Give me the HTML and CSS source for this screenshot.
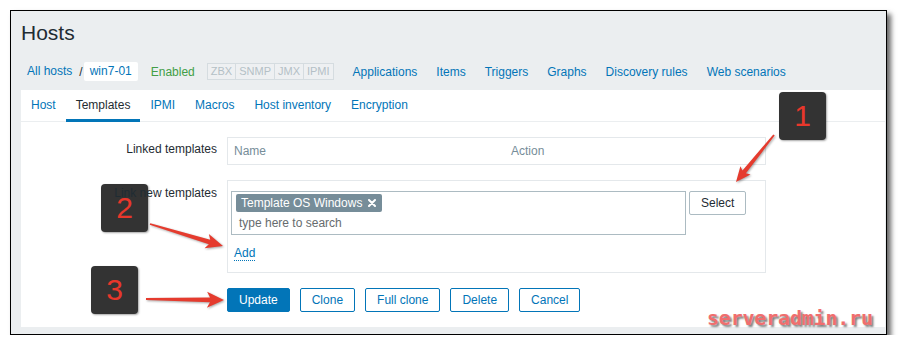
FILE: index.html
```html
<!DOCTYPE html>
<html>
<head>
<meta charset="utf-8">
<title>Hosts</title>
<link rel="stylesheet" href="styles.css">
</head>
<body>
<div class="frame">
  <header class="page-head">
    <h1 class="title">Hosts</h1>
    <div class="crumbs">
      <ul class="path">
        <li><a class="crumb">All hosts</a></li>
        <li class="sep">/</li>
        <li><span class="crumb current">win7-01</span></li>
      </ul>
      <span class="status-on">Enabled</span>
      <span class="avail"><span>ZBX</span><span>SNMP</span><span>JMX</span><span>IPMI</span></span>
      <nav class="links">
        <a>Applications</a><a>Items</a><a>Triggers</a><a>Graphs</a><a>Discovery rules</a><a>Web scenarios</a>
      </nav>
    </div>
  </header>
  <section class="panel">
    <ul class="tabs">
      <li><a class="tab">Host</a></li>
      <li><a class="tab active">Templates</a></li>
      <li><a class="tab">IPMI</a></li>
      <li><a class="tab">Macros</a></li>
      <li><a class="tab">Host inventory</a></li>
      <li><a class="tab">Encryption</a></li>
    </ul>
    <div class="form">
      <div class="lbl">Linked templates</div>
      <div class="linked">
        <span class="th th-name">Name</span>
        <span class="th">Action</span>
      </div>
      <div class="lbl lbl-2">Link new templates</div>
      <div class="newbox">
        <div class="ms-row">
          <div class="ms">
            <div class="tags">
              <span class="tag">Template OS Windows<svg class="tag-x" width="8" height="8" viewBox="0 0 8 8"><path d="M1 1L7 7M7 1L1 7" stroke="#fff" stroke-width="2" stroke-linecap="round"/></svg></span>
            </div>
            <div class="search">type here to search</div>
          </div>
          <button class="btn btn-grey">Select</button>
        </div>
        <div class="add-row"><a class="add">Add</a></div>
      </div>
      <div class="actions">
        <button class="btn btn-primary">Update</button>
        <button class="btn">Clone</button>
        <button class="btn">Full clone</button>
        <button class="btn">Delete</button>
        <button class="btn">Cancel</button>
      </div>
    </div>
  </section>
</div>

<div class="badge b1">1</div>
<div class="badge b2">2</div>
<div class="badge b3">3</div>

<svg class="arrows" width="898" height="346" viewBox="0 0 898 346">
  <g fill="#e53b2e">
    <polygon transform="translate(774 135) rotate(128.96)" points="0,-0.9 47.4,-2.2 45.4,-6.5 60.4,0 45.4,6.5 47.4,2.2 0,0.9"/>
    <polygon transform="translate(150 224) rotate(16.77)" points="0,-0.9 62.2,-2.4 59.2,-7.5 76.2,0 59.2,7.5 62.2,2.4 0,0.9"/>
    <polygon transform="translate(146 299) rotate(0.73)" points="0,-0.9 64,-2.4 61,-8 78,0 61,8 64,2.4 0,0.9"/>
  </g>
</svg>

<div class="watermark">serveradmin.ru</div>
</body>
</html>
```

FILE: styles.css
```css
body {
  margin: 0;
  background: #fff;
  font-family: "Liberation Sans", Arial, sans-serif;
  font-size: 12px;
  color: #1f2c33;
}

a { color: #0275b8; text-decoration: none; }
ul { list-style: none; margin: 0; padding: 0; }

.frame {
  margin: 10px 0 0 10px;
  width: 877px;
  height: 325px;
  box-sizing: border-box;
  border: 1px solid #000;
  background: #ebeef0;
  padding: 10px 1px 0 10px;
  box-shadow: 4px 4px 5px rgba(0, 0, 0, 0.6);
}

.title {
  margin: 0;
  font-size: 21px;
  font-weight: normal;
  line-height: 24px;
  color: #1f2c33;
}

.crumbs {
  display: flex;
  align-items: center;
  margin-top: 17px;
  height: 19px;
}

.path { display: flex; align-items: center; }
.crumb {
  display: block;
  padding: 0 6px;
  line-height: 19px;
  color: #0275b8;
}
.current { background: #fff; border-radius: 2px; }
.sep { margin: 0 1px; color: #1f2c33; }

.status-on { margin-left: 13px; color: #429e47; }

.avail { display: flex; margin-left: 12px; }
.avail span {
  border: 1px solid #d5dce0;
  margin-left: -1px;
  padding: 0 3px;
  font-size: 11px;
  line-height: 15px;
  color: #b4c0c6;
  background: #eef0f2;
}
.avail span:first-child { margin-left: 0; }

.links { display: flex; gap: 19px; margin-left: 19px; }

.panel {
  margin-top: 9px;
  background: #fff;
}

.tabs {
  display: flex;
  align-items: flex-start;
  height: 31px;
  border-bottom: 1px solid #ebeef0;
}
.tab {
  display: block;
  height: 32px;
  box-sizing: border-box;
  padding: 0 10px;
  line-height: 31px;
  color: #0275b8;
}
.tab.active {
  color: #1f2c33;
  border-bottom: 3px solid #0275b8;
}

.form {
  display: grid;
  grid-template-columns: 196px 539px;
  column-gap: 10px;
  row-gap: 15px;
  padding: 15px 0;
}

.lbl {
  text-align: right;
  padding-top: 5px;
  line-height: 14px;
  position: relative;
  z-index: 3;
}
.lbl-2 { padding-top: 6px; }

.linked {
  border: 1px solid #e4e8eb;
  height: 26px;
  display: flex;
  align-items: center;
}
.th { color: #768d99; padding: 0 6px; }
.th-name { width: 277px; box-sizing: border-box; }

.newbox {
  border: 1px solid #e4e8eb;
  padding: 10px 5px 11px 3px;
}
.ms-row { display: flex; align-items: flex-start; gap: 3px; }
.ms {
  width: 455px;
  box-sizing: border-box;
  border: 1px solid #acbbc2;
  padding: 2px 4px 3px;
}
.tags { display: flex; }
.tag {
  display: flex;
  align-items: center;
  gap: 6px;
  height: 18px;
  padding: 0 6px 0 5px;
  background: #768d99;
  color: #fff;
  border-radius: 2px;
  line-height: 18px;
}
.tag-x { display: block; }
.search {
  margin-top: 3px;
  padding-left: 3px;
  line-height: 16px;
  color: #666b6e;
}

.add-row { display: flex; margin-top: 11px; padding-left: 3px; }
.add {
  line-height: 14px;
  border-bottom: 1px dotted #0275b8;
}

.actions {
  grid-column: 2;
  display: flex;
  gap: 10px;
}

.btn {
  height: 24px;
  box-sizing: border-box;
  margin: 0;
  border: 1px solid #0275b8;
  border-radius: 2px;
  padding: 0 11px;
  font-family: inherit;
  font-size: 12px;
  line-height: 22px;
  background: #fff;
  color: #0275b8;
}
.btn-primary { background: #0275b8; color: #fff; }
.btn-grey { border-color: #acbbc2; color: #1f2c33; }

.badge {
  position: absolute;
  z-index: 2;
  width: 47px;
  height: 48px;
  background: #333;
  border-radius: 4px;
  color: #e8372b;
  font-size: 30px;
  line-height: 48px;
  text-align: center;
  box-shadow: 1px 1px 2px rgba(0, 0, 0, 0.35);
}
.b1 { left: 779px; top: 92px; }
.b2 { left: 101px; top: 184px; }
.b3 { left: 91px; top: 266px; }

.arrows {
  position: absolute;
  left: 0;
  top: 0;
  z-index: 4;
  pointer-events: none;
  filter: drop-shadow(1px 1px 1px rgba(0, 0, 0, 0.35));
}

.watermark {
  position: absolute;
  left: 707px;
  top: 308px;
  z-index: 5;
  font-family: "DejaVu Sans Mono", monospace;
  font-weight: bold;
  font-size: 20px;
  line-height: 20px;
  letter-spacing: -0.2px;
  color: #f06e6e;
  text-shadow: 2px 2px 2px rgba(0, 0, 0, 0.5);
}
```
